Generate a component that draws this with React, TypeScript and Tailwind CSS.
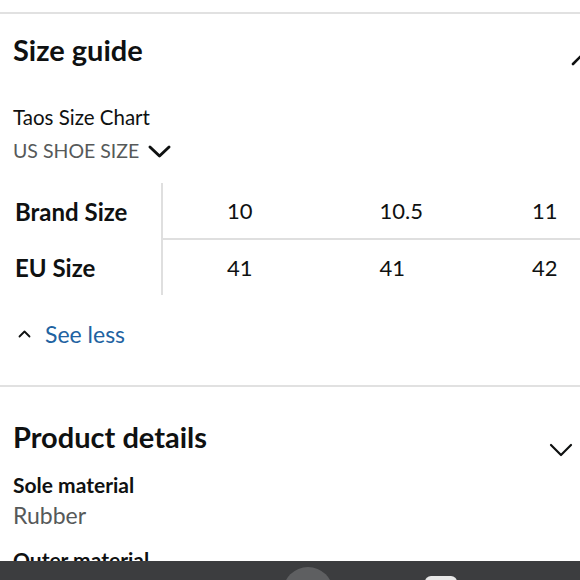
import React from "react";

const font = { fontFamily: 'Lato, "Noto Sans", Arial, sans-serif' };

// 22x12 chevron, drawn with a stroke so it can sit next to text
function Chevron({ dir, className, width = 2.4 }: { dir: "up" | "down"; className?: string; width?: number }) {
  return (
    <svg viewBox="0 0 22 12" className={className} fill="none" stroke="currentColor" strokeWidth={width} strokeLinecap="round" strokeLinejoin="round" overflow="visible" preserveAspectRatio="none">
      {dir === "down" ? <path d="M1 1L11 11L21 1" /> : <path d="M1 11L11 1L21 11" />}
    </svg>
  );
}

const rows = [
  { label: "Brand Size", values: ["10", "10.5", "11"], h: "h-[57px] border-b-2 border-[#dfdfdf]" },
  { label: "EU Size", values: ["41", "41", "42"], h: "h-[55px]" },
];

export default function App() {
  return (
    <div className="w-[580px] h-[580px] bg-white overflow-hidden relative text-[#0f1111]" style={font}>
      <div className="h-[12px]" />
      <div className="border-t-2 border-[#e1e1e1]" />

      {/* Size guide */}
      <section className="pl-[13px]">
        <div className="flex items-start justify-between mt-[19px]">
          <h2 className="text-[29px] font-bold leading-[34px]">Size guide</h2>
          <Chevron dir="up" width={2.6} className="w-[22px] h-[12px] mt-[20px] mr-[-14px] shrink-0" />
        </div>
        <p className="mt-[38px] text-[20.5px] leading-[24px]">Taos Size Chart</p>
        <button className="mt-[10px] flex items-center gap-[10px] text-[19.5px] leading-[24px] text-[#565959]">
          US SHOE SIZE
          <Chevron dir="down" width={3} className="w-[21px] h-[11px] text-[#0f1111]" />
        </button>

        <div className="mt-[20px] ml-[-13px] flex whitespace-nowrap">
          <div className="w-[163px] shrink-0 flex flex-col border-r-2 border-[#dfdfdf]">
            <div className="h-[57px] flex items-center pl-[15px] text-[24px] font-bold">{rows[0].label}</div>
            <div className="h-[55px] flex items-center pl-[15px] text-[24px] font-bold">{rows[1].label}</div>
          </div>
          <div className="flex-1 min-w-0 overflow-hidden flex flex-col">
            {rows.map((r) => (
              <div key={r.label} className={`${r.h} flex items-center text-[22px]`}>
                {r.values.map((v, j) => (
                  <span key={j} className="w-[152.5px] shrink-0 pl-[64px]">{v}</span>
                ))}
              </div>
            ))}
          </div>
        </div>

        <button className="mt-[25px] flex items-center gap-[15px] pl-[6px] text-[23px] leading-[28px] text-[#2162a1]">
          <Chevron dir="up" width={3.6} className="w-[11px] h-[6px] text-[#0f1111]" />
          See less
        </button>
      </section>

      <div className="mt-[37px] border-t-2 border-[#e1e1e1]" />

      {/* Product details */}
      <section className="pl-[13px] pr-[8px]">
        <div className="flex items-start justify-between mt-[33px]">
          <h2 className="text-[29px] font-bold leading-[34px]">Product details</h2>
          <Chevron dir="down" width={2.2} className="w-[22px] h-[12px] mt-[24px] shrink-0" />
        </div>
        <p className="mt-[16px] text-[21px] font-bold leading-[26px]">Sole material</p>
        <p className="mt-[3px] text-[23px] leading-[28px] text-[#565959]">Rubber</p>
        <p className="mt-[18px] text-[21px] font-bold leading-[26px]">Outer material</p>
      </section>

      {/* system nav bar */}
      <div className="absolute left-0 right-0 bottom-0 h-[19px] bg-[#3c3d3f] overflow-hidden">
        <div className="absolute left-[283px] top-[6px] w-[50px] h-[50px] rounded-full bg-[#5e5f61]" />
        <div className="absolute left-[425px] top-[15px] w-[32px] h-[24px] rounded-[6px] bg-[#e8e8e8]" />
      </div>
    </div>
  );
}
